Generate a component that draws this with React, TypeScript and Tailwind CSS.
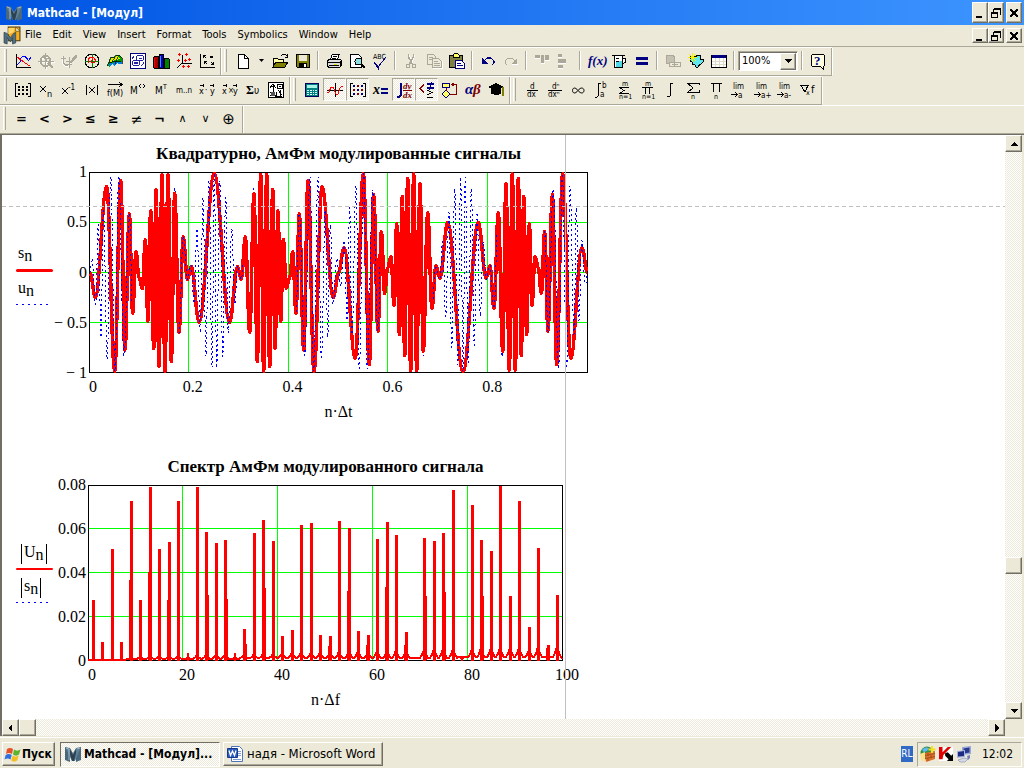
import React from 'react';

type Point = [number, number];

const raised = 'border border-t-white border-l-white border-r-[#716f64] border-b-[#716f64] shadow-[inset_-1px_-1px_0_#aca899] bg-[#ece9d8]';
const checker = 'bg-[repeating-conic-gradient(#ffffff_0_25%,#ece9d8_0_50%)] bg-size-[2px_2px]';

const Icon: React.FC<{ children: React.ReactNode; smooth?: boolean; size?: number }> = ({ children, smooth, size = 16 }) => (
  <svg width={size} height={size} viewBox="0 0 16 16" fill="none" className="shrink-0 overflow-visible" shapeRendering={smooth ? 'auto' : 'crispEdges'} aria-hidden="true">
    {children}
  </svg>
);

const Sans: React.FC<{ x: number; y: number; s?: number; children: React.ReactNode }> = ({ x, y, s = 9, children }) => (
  <text x={x} y={y} fontSize={s} fill="#000" fontFamily="'DejaVu Sans Condensed', 'DejaVu Sans', sans-serif">{children}</text>
);

const Serif: React.FC<{ x: number; y: number; s?: number; fill?: string; children: React.ReactNode }> = ({ x, y, s = 13, fill = '#000080', children }) => (
  <text x={x} y={y} fontSize={s} fill={fill} fontWeight="bold" fontStyle="italic" fontFamily="'Liberation Serif', serif">{children}</text>
);

const MathcadLogo: React.FC<{ size?: number }> = ({ size = 16 }) => (
  <Icon smooth size={size}>
    <path d="M0 1l5 2v13l-5-2zM11 3l5-2v13l-5 2z" fill="#49687c" />
    <path d="M0 1l5 1 3 5 3-5 5-1-6 14H7z" fill="#5f7f93" />
    <path d="M5 3l3 6 3-6v4l-2 8H7L5 8z" fill="#2c4252" />
    <path d="M1 2l3 1v11M15 2l-3 1" stroke="#9fb6c4" />
  </Icon>
);

const MathcadDoc = () => (
  <Icon smooth size={17}>
    <path d="M4 0h11v13H4z" fill="#f5ad1c" stroke="#4d3a10" />
    <path d="M4 1h6l-1 4-5 2z" fill="#ffd668" />
    <path d="M11 0l4 4h-4z" fill="#fff3c4" stroke="#4d3a10" strokeWidth=".6" />
    <path d="M0 5l3 1 3 4 3-4 2-1v10l-3 1v-6l-2 4-3-4v6l-3-1z" fill="#526f80" stroke="#253b47" strokeWidth=".6" />
  </Icon>
);

/* graph toolbar */
const graphIcons: [string, React.ReactNode][] = [
  ['X-Y plot', <Icon><path d="M1.5 1v14M1 14.5h15" stroke="#000" /><path d="M2 12l3-3 1-4 2-2h2l3 4h1l2-3" stroke="#00f" /><path d="M2 4l4 3 4 3 5 3" stroke="#f00" /></Icon>],
  ['Zoom', <Icon><g stroke="#fff" transform="translate(1 1)"><circle cx="7.5" cy="8" r="5" /><path d="M0 8.5h16M7.5 1v15" /></g><g stroke="#aca899"><circle cx="7.5" cy="8" r="5" strokeWidth="2" /><path d="M0 8.5h16M7.5 0v16M5 3l2 3M9 5h2v3H8z" /><path d="M10 10l5 5" strokeWidth="2" /></g></Icon>],
  ['Trace', <Icon><path d="M1 4v5l3 4h5M8 12l8-8" stroke="#fff" /><path d="M0 5h5M2 3v6l3 4 4-2M5 8h6M8 4v11M4 11h7" stroke="#aca899" /><path d="M8 10l6-8h2v2l-6 6z" fill="#aca899" /></Icon>],
  ['Polar plot', <Icon><circle cx="8" cy="8" r="7" stroke="#000" /><path d="M8.5 1v14M1 8.5h14" stroke="#008000" /><path d="M4 10V6l3-2 3 1 2 3-2 2-3-1 2-4" stroke="#f00" /></Icon>],
  ['Surface plot', <Icon><path d="M0 13l4-9h3l2-2h3l3 3v6h-3l-2-2-2 4-3-2-2 3z" fill="#00a000" /><path d="M4 5h3l2-2 3 1 1 2-5 1-2 1-3 1z" fill="#e8e800" /><path d="M1 12l2-2h3l2-2 3 1h4v2h-3l-2-1-2 3-3-2-2 2z" fill="#0080e0" /><path d="M0 13l4-9h3l2-2h3l3 3v6M4 10l4-6M8 11l3-7M2 10l5-2 7 0" stroke="#000" strokeWidth=".7" /></Icon>],
  ['Contour plot', <Icon><path d="M.5.5h15v15H.5z" fill="#fff" stroke="#000080" /><g stroke="#2020a0"><ellipse cx="10" cy="5" rx="4" ry="3" /><ellipse cx="6" cy="10" rx="4" ry="3" /><ellipse cx="6" cy="10" rx="2" ry="1" /><path d="M9 5h3M11 13l2-2V9M2 6l2-3" /></g></Icon>],
  ['3D bar chart', <Icon><path d="M0 5l2-2h3v12H1l-1-1z" fill="#a00000" stroke="#000" /><path d="M6 2l1-1h3v14H6z" fill="#0000c8" stroke="#000" /><path d="M11 6l1-1h3l1 1v9h-5z" fill="#008000" stroke="#000" /><path d="M1.5 5v9" stroke="#f00" /><path d="M7.500 3v11" stroke="#48f" /></Icon>],
  ['3D scatter plot', <Icon><path d="M6.500 2v8.500h9M6 10l-5 5" stroke="#000" /><path d="M3.500 0v3M2 1.500h3M10.500 0v3M9 1.500h3M13.500 5v3M12 6.500h3M2.500 6v3M1 7.500h3M9.500 6v3M8 7.500h3M7.500 12v3M6 13.500h3M12.500 12v3M11 13.500h3" stroke="#f00" /></Icon>],
  ['Vector field plot', <Icon><path d="M1.500 1v14M1 14.500h15" stroke="#000" /><path d="M4 2h3M4.500 2v3M4 2l3 3M11 3h3M13.500 3v2M14 3l-3 2M5 8h3M5.500 8v3M5 8l3 3M12 9l3 3M12 11.500h3M14.500 9v3" stroke="#000" /></Icon>],
];

/* standard toolbar, one list for each separated block */
const NewIcon = <Icon><path d="M3.500 1.500h6l4 4v9.500h-10z" fill="#fff" stroke="#000" /><path d="M9.500 1.500v4h4" stroke="#000" /></Icon>;
const OpenIcon = <Icon><path d="M1 14V5h4l1 1h5v3" fill="#ffffa0" stroke="#000" /><path d="M1 14l3-5h12l-3 5z" fill="#808000" stroke="#000" /><path d="M9 3l2-2h2l2 2M15.500 1v3H13" stroke="#000" /></Icon>;
const SaveIcon = <Icon><path d="M1.500 1.500h13v13h-12l-1-1z" fill="#808000" stroke="#000" /><path d="M4 2h8v6H4z" fill="#ece9d8" /><path d="M4 10h8v5H4z" fill="#000" /><path d="M9 11h2v3H9z" fill="#fff" /></Icon>;

const fileIcons: [string, React.ReactNode][] = [
  ['Print', <Icon><path d="M4.500 6l2-5h7l-2 5" fill="#fff" stroke="#000" /><path d="M7 3.500h4M6 5.500h4" stroke="#000" /><path d="M1.500 7.500l2-1h11l1 1v5l-2 2h-11l-1-2z" fill="#ddd" stroke="#000" /><path d="M1 9.500h13M3 12.500h10M14 8v5" stroke="#000" /><path d="M8 11h3" stroke="#e0e000" /></Icon>],
  ['Print preview', <Icon><path d="M1.500 1.500h8l3 3v10h-11z" fill="#fff" stroke="#000" /><circle cx="9.500" cy="8.500" r="3.500" fill="#8fe0e0" stroke="#000" /><path d="M12 11l4 4" stroke="#000" strokeWidth="2" /></Icon>],
  ['Check spelling', <Icon><Sans x={1} y={6} s={7}>ABC</Sans><path d="M2 9l4 5 8-10" stroke="#000080" /><path d="M2 9l4 4v2z" fill="#000080" stroke="#000080" /></Icon>],
];
const editIcons: [string, React.ReactNode][] = [
  ['Cut', <Icon><g stroke="#fff" transform="translate(1 1)"><path d="M5 1l4 9M11 1l-4 9" /></g><g stroke="#aca899"><path d="M5.500 1v3l4 7M10.500 1v3l-4 7" strokeWidth="1.500" /><circle cx="5" cy="13" r="2" /><circle cx="11" cy="13" r="2" /></g></Icon>],
  ['Copy', <Icon><g stroke="#aca899" fill="#ece9d8"><path d="M1.500 1.500h6l2 2v8h-8z" /><path d="M6.500 5.500h6l3 3v6h-9z" /><path d="M3 4.500h4M3 6.500h3M8 8.500h4M8 10.500h6M8 12.500h6" /></g><path d="M7 15.500h9.500V8" stroke="#fff" /></Icon>],
  ['Paste', <Icon><path d="M.5 2.500h13v12H.5z" fill="#808040" stroke="#000" /><path d="M4 4V2l2-2h2l2 2v2z" fill="#ffff60" stroke="#000" /><path d="M6.500 7.500h6l3 3v5h-9z" fill="#fff" stroke="#000080" /><path d="M8 10.500h4M8 12.500h6" stroke="#000080" /></Icon>],
];
const undoIcons: [string, React.ReactNode][] = [
  ['Undo', <Icon><path d="M4 8l3-3h4l3 3v2l-2 2" stroke="#000080" strokeWidth="1.200" /><path d="M2 5v6h6z" fill="#000080" /></Icon>],
  ['Redo', <Icon><path d="M12 8L9 5H5L2 8v2l2 2" stroke="#aca899" /><path d="M14 5v6H8z" fill="#aca899" /><path d="M9 11.500h6" stroke="#fff" /></Icon>],
];
const alignIcons: [string, React.ReactNode][] = [
  ['Align across', <Icon><path d="M1 2h5v3H1zM7 2h3v8H7zM11 2h4v5h-4z" fill="#aca899" /><path d="M1 5.500h5M7 10.500h4M11 7.500h5" stroke="#fff" /></Icon>],
  ['Align down', <Icon><path d="M1 1h4v3H1zM1 6h8v4H1zM1 12h5v3H1z" fill="#aca899" /><path d="M1 4.500h4M1 10.500h8M1 15.500h5" stroke="#fff" /></Icon>],
];
const insertIcons: [string, React.ReactNode][] = [
  ['Insert function', <Icon><Serif x={0} y={12} s={13}>f(x)</Serif></Icon>],
  ['Insert unit', <Icon><path d="M1 2.500h13M3.500 3v11.500h8V3M12 5.500h2.500V9L12 11" fill="#fff" stroke="#000" /><path d="M5 8h6v6H5z" fill="#50d8e8" /><path d="M5 5.500h3M5 8.500h3" stroke="#000" /></Icon>],
  ['Calculate', <Icon><path d="M2 4h12v3H2zM2 9h12v3H2z" fill="#000080" /></Icon>],
];
const linkIcons: [string, React.ReactNode][] = [
  ['Insert hyperlink', <Icon><path d="M1.500 2h6l2 2v6h-8z" fill="#c5c1b2" stroke="#aca899" /><path d="M4.500 9.500h5v4h-5zM9.500 9.500h6v4h-6z" fill="#ece9d8" stroke="#aca899" /><path d="M7 11.500h6" stroke="#aca899" /></Icon>],
  ['Component wizard', <Icon><path d="M2 3h4l2 1 1-2h3v4h3l1 2-3 3h-1l-2 3H8l-1-2-3-1V8H2z" fill="#60e8f0" stroke="#000" /><path d="M1 1l7 7M8 1L1 8M0 4.500h9M4.500 0v9" stroke="#f0f000" /></Icon>],
  ['Run Math Connex', <Icon><path d="M.5 2.500h15v12H.5z" fill="#fff" stroke="#000" /><path d="M1 2h14v3H1z" fill="#000080" /><path d="M4.500 5v9M8.500 5v9M12.500 5v9M1 8.500h14M1 11.500h14" stroke="#dedac8" /></Icon>],
];

const Vec: React.FC<{ op: string }> = ({ op }) => (
  <Icon><path d="M1 3.500h4M11 3.500h4M4 2v3M14 2v3" stroke="#000" /><Sans x={0} y={12} s={9}>x</Sans><Sans x={6} y={11} s={8}>{op}</Sans><Sans x={11} y={12} s={9}>y</Sans></Icon>
);

const matrixIcons: [string, React.ReactNode][] = [
  ['Matrix', <Icon><path d="M3 1.500H.5v13H3M13 1.500h2.500v13H13" stroke="#000" /><path d="M3 4h2v2H3zM7 4h2v2H7zM11 4h2v2h-2zM3 7h2v2H3zM7 7h2v2H7zM11 7h2v2h-2zM3 11h2v2H3zM7 11h2v2H7zM11 11h2v2h-2z" fill="#000" /></Icon>],
  ['Subscript', <Icon><path d="M2 4l6 6M8 4l-6 6" stroke="#000" /><Sans x={9} y={15}>n</Sans></Icon>],
  ['Inverse', <Icon><path d="M1 6l6 6M7 6l-6 6" stroke="#000" /><Sans x={7} y={8} s={8}>-1</Sans></Icon>],
  ['Determinant', <Icon><path d="M2.500 3v10M13.500 3v10M5 5l6 6M11 5l-6 6" stroke="#000" /></Icon>],
  ['Vectorize', <Icon><path d="M1 2.500h14M12 0l3 2.500L12 5" stroke="#000" /><Sans x={0} y={14} s={9}>f(M)</Sans></Icon>],
  ['Matrix column', <Icon><Sans x={0} y={12} s={10}>M</Sans><path d="M11 2L9 4l2 2M13 2l2 2-2 2" stroke="#000" /></Icon>],
  ['Matrix transpose', <Icon><Sans x={2} y={12} s={10}>M</Sans><Sans x={10} y={7} s={7}>T</Sans></Icon>],
  ['Range variable', <Icon><Sans x={0} y={11} s={8}>m..n</Sans></Icon>],
  ['Dot product', <Vec op="·" />],
  ['Cross product', <Vec op="×" />],
  ['Vector sum', <Icon><text x="1" y="12" fontSize="12" fontWeight="bold" fill="#000" fontFamily="'Liberation Serif', serif">Σ</text><Sans x={9} y={12} s={10}>υ</Sans></Icon>],
  ['Picture', <Icon><path d="M.5.5h15v15H.5z" fill="#fff" stroke="#000" /><path d="M2 6l3-4 3 4M5 2v8M2 10h5M9 2h5v4H9zM10 8l4 5M2 13h6M9 10l-1 4h6M11 4h2M3 4h4M12 8v6" stroke="#000" /><path d="M3 10h4v4H3z" fill="#555" /></Icon>],
];

const mathIcons: [string, React.ReactNode, boolean][] = [
  ['Calculator toolbar', <Icon><path d="M1.500 1.500h13v13h-13z" fill="#008080" stroke="#000060" /><path d="M3 3h10v3H3z" fill="#a8f0e8" /><path d="M3 8h2v1H3zM6 8h2v1H6zM9 8h1v1H9zM11 8h2v1h-2zM3 10h2v1H3zM6 10h2v1H6zM9 10h1v1H9zM11 10h2v1h-2zM3 12h2v1H3zM6 12h2v1H6zM9 12h1v1H9zM11 12h2v1h-2z" fill="#e0ffff" /></Icon>, false],
  ['Graph toolbar', <Icon><path d="M0 8.500h16M8.500 1v14" stroke="#000" /><path d="M0 11l2-1 2-5h2l3 7h2l2-6 2-2h1" stroke="#f00" /></Icon>, true],
  ['Matrix toolbar', <Icon><path d="M3 1.500H.5v13H3M13 1.500h2.500v13H13" stroke="#000" /><path d="M3 3h2v2H3zM11 3h2v2h-2zM7 7h2v2H7zM3 11h2v2H3zM11 11h2v2h-2z" fill="#000080" /><path d="M7 3h2v2H7zM3 7h2v2H3zM11 7h2v2h-2zM7 11h2v2H7z" fill="#800000" /></Icon>, true],
  ['Evaluation toolbar', <Icon><Serif x={0} y={12} s={14} fill="#000">x</Serif><path d="M8 6h7v2H8zM8 10h7v2H8z" fill="#000080" /></Icon>, false],
  ['Calculus toolbar', <Icon><path d="M6 1.500H4.500v12L3 15H1" stroke="#000080" strokeWidth="2" /><Serif x={7} y={7} s={9} fill="#800000">dy</Serif><path d="M7 8.500h9" stroke="#800000" /><Serif x={7} y={16} s={9} fill="#800000">dx</Serif></Icon>, true],
  ['Boolean toolbar', <Icon><path d="M5 3L1 6.500 5 10" stroke="#800000" strokeWidth="1.500" /><path d="M8 1h7v2H8zM8 5h7v2H8z" fill="#000080" /><path d="M13 0l-3 8" stroke="#000080" /><path d="M8 8l5 2.500L8 13M8 15.500h6" stroke="#000" /></Icon>, true],
  ['Programming toolbar', <Icon><path d="M.5 1.500h7v4h-7z" fill="#ffff60" stroke="#000080" /><path d="M4 8l4 4-4 4-4-4z" fill="#ffff60" stroke="#000080" /><path d="M4.500 5.500v3M8 12.500h6V2.500h-4M12 1l-2 1.500L12 4" stroke="#800000" /></Icon>, false],
  ['Greek toolbar', <Icon><Serif x={0} y={12} s={15}>α</Serif><Serif x={8} y={12} s={15} fill="#800000">β</Serif></Icon>, false],
  ['Symbolic toolbar', <Icon><path d="M0 5l8-4 8 4-8 4z" fill="#000" /><path d="M3 7h10v5l-5 1-5-1z" fill="#000" /><path d="M15 5v9" stroke="#808000" strokeWidth="2" /></Icon>, false],
];

const Bounds: React.FC<{ sym: string; top?: string; bottom?: string }> = ({ sym, top, bottom }) => (
  <Icon>
    {top && <Sans x={6} y={4} s={7}>{top}</Sans>}
    {sym === 'Σ' ? <path d={top ? 'M13 5.500H4l4 3-4 3h9' : 'M14 3V1.500H3l5 4.500-5 4h11V8'} stroke="#000" /> : <path d={top ? 'M3 5.500h11M6.500 5v7M10.500 5v7' : 'M3 1.500h11M5.500 1v9M11.500 1v9'} stroke="#000" />}
    <Sans x={bottom === 'n' ? 6 : 3} y={17} s={7}>{bottom}</Sans>
  </Icon>
);

const Limit: React.FC<{ side?: string }> = ({ side }) => (
  <Icon><Sans x={2} y={7} s={8}>lim</Sans><path d="M0 12.500h6M4 10l2 2.500L4 15" stroke="#000" /><Sans x={7} y={16} s={8}>{'a' + (side ?? '')}</Sans></Icon>
);

const calculusIcons: [string, React.ReactNode][] = [
  ['Derivative', <Icon><Sans x={6} y={7} s={8}>d</Sans><path d="M3 8.500h11" stroke="#000" /><Sans x={3} y={15} s={8}>dx</Sans></Icon>],
  ['Nth derivative', <Icon><Sans x={5} y={7} s={8}>dⁿ</Sans><path d="M1 8.500h14" stroke="#000" /><Sans x={1} y={15} s={8}>dxⁿ</Sans></Icon>],
  ['Infinity', <Icon smooth><path d="M8 8.500C5 4.500 2.500 6 2.500 8.500S5 12.500 8 8.500s6-2.500 6 0-3 4-6 0z" stroke="#000" /></Icon>],
  ['Definite integral', <Icon><path d="M8 1.500H5.500v12L4 15H2" stroke="#000" /><Sans x={9} y={6} s={8}>b</Sans><Sans x={7} y={15} s={8}>a</Sans></Icon>],
  ['Summation', <Bounds sym="Σ" top="m" bottom="n=1" />],
  ['Iterated product', <Bounds sym="Π" top="m" bottom="n=1" />],
  ['Indefinite integral', <Icon><path d="M11 1.500H8.500v12L7 14.500H5" stroke="#000" /></Icon>],
  ['Range summation', <Bounds sym="Σ" bottom="n" />],
  ['Range product', <Bounds sym="Π" bottom="n" />],
  ['Two-sided limit', <Limit />],
  ['Limit from above', <Limit side="+" />],
  ['Limit from below', <Limit side="-" />],
  ['Gradient', <Icon><path d="M1 3.500h7L5 10z" stroke="#000" /><Sans x={6} y={13} s={7}>x</Sans><Sans x={11} y={11} s={11}>f</Sans></Icon>],
];

const booleanOps: [string, string][] = [
  ['Equal to', '='], ['Less than', '<'], ['Greater than', '>'], ['Less than or equal', '≤'], ['Greater than or equal', '≥'],
  ['Not equal', '≠'], ['Not', '¬'], ['And', '∧'], ['Or', '∨'], ['Xor', '⊕'],
];

const ToolButton: React.FC<{ label: string; pressed?: boolean; children: React.ReactNode }> = ({ label, pressed, children }) => (
  <button
    type="button"
    aria-label={label}
    className={`flex h-[23px] w-[23px] shrink-0 items-center justify-center ${pressed ? `border border-t-[#aca899] border-l-[#aca899] border-r-white border-b-white ${checker}` : ''}`}
  >
    {children}
  </button>
);

const Buttons: React.FC<{ items: [string, React.ReactNode, boolean?][] }> = ({ items }) => (
  <>
    {items.map(([label, icon, pressed]) => (
      <ToolButton key={label} label={label} pressed={pressed}>{icon}</ToolButton>
    ))}
  </>
);

const Separator = () => (
  <div className="flex w-2 shrink-0 justify-center">
    <div className="h-[19px] w-[2px] border-l border-[#aca899] bg-white" />
  </div>
);

const Strip: React.FC<{ children: React.ReactNode; wide?: boolean }> = ({ children, wide }) => (
  <div className={`flex h-[29px] border-t border-t-white border-b border-b-[#aca899] ${wide ? '' : 'w-max'}`}>{children}</div>
);

const Group: React.FC<{ children: React.ReactNode; first?: boolean }> = ({ children, first }) => (
  <div className={`flex shrink-0 items-center border-r border-[#aca899] pr-[2px] pb-[2px] shadow-[1px_0_0_#ffffff] ${first ? 'pl-1' : 'ml-px pl-[2px]'}`}>
    <div className="mr-1 h-[23px] w-[3px] border-l border-l-white border-r border-r-[#aca899]" />
    {children}
  </div>
);

const WindowButtons: React.FC<{ small?: boolean }> = ({ small }) => {
  const box = `flex w-4 items-center justify-center ${small ? 'h-[15px]' : 'h-[21px]'} ${raised}`;
  return (
    <div className="flex">
      <button type="button" aria-label="Minimize" className={box}>
        <Icon size={12}><path d="M3 12h8v2H3z" fill="#000" /></Icon>
      </button>
      <button type="button" aria-label="Restore" className={box}>
        <Icon size={12}><path d="M5 1h10v3H5zM13 4h2v6h-2zM1 6h10v3H1z" fill="#000" /><path d="M5 2v4M1.700 7v7.300h8.600V7" stroke="#000" strokeWidth="1.400" /></Icon>
      </button>
      <button type="button" aria-label="Close" className={`ml-[2px] ${box}`}>
        <Icon size={12}><path d="M3 3l10 10M13 3L3 13" stroke="#000" strokeWidth="3.500" /></Icon>
      </button>
    </div>
  );
};

/* Turning points of the modulated carrier over the first quarter: time in 1/1492, level in percent. */
const carrierStart: Point[] = [[0, 0], [16, -25], [50, 86], [74, -99], [92, 92], [105, -78], [118, 59], [128, -41], [138, 21], [147, -5], [157, -16], [166, 33]];
const carrierDense: Point[] = [[174, -49], [182, 62], [191, -76], [198, 83], [207, -94], [216, 98], [225, -99], [234, 98], [244, -89], [254, 79], [267, -60], [280, 36], [292, -7]];
const signalQuarter: Point[] = [...carrierStart, ...carrierDense, [304, 6], [327, -50], [373, 99]];
const quadratureQuarter: Point[] = [
  [0, 0], [6, 14], [17, -32], [25, 48], [33, -65], [40, 62], [52, -87], [62, 96], [75, -99], [86, 96], [102, -83], ...carrierStart.slice(6),
  ...carrierDense.slice(0, 9), [255, 84], ...carrierDense.slice(10), [303, 7], [312, -31], [321, 44], [331, -60], [339, 75], [348, -84], [357, 92], [366, -95], [373, 99],
];

const PERIOD = 1492;

const unfold = (quarter: Point[]): Point[] => {
  const half = [...quarter, ...quarter.slice(0, -1).reverse().map(([t, v]): Point => [PERIOD / 2 - t, v])];
  return [...half, ...half.slice(0, -1).reverse().map(([t, v]): Point => [PERIOD - t, -v])];
};

const wavePath = (points: Point[]) => {
  const sx = (t: number) => (t / 3 + 1).toFixed(1);
  const sy = (v: number) => (100.5 - v).toFixed(1);
  return points.reduce((d, [t, v], i) => {
    if (i === 0) return `M${sx(t)} ${sy(v)}`;
    const [pt, pv] = points[i - 1];
    const bend = (t - pt) * 0.37;
    return `${d}C${sx(pt + bend)} ${sy(pv)} ${sx(t - bend)} ${sy(v)} ${sx(t)} ${sy(v)}`;
  }, '');
};

const signalPath = wavePath(unfold(signalQuarter));
const quadraturePath = wavePath(unfold(quadratureQuarter));

/* Spectral lines: position and height in plot pixels. */
const spectrum: Point[] = [
  [5, 61], [14, 19], [24, 112], [33, 19], [43, 160], [52, 61], [62, 174], [71, 112], [81, 119], [90, 160], [100, 8], [109, 174], [118, 129], [128, 118], [137, 121],
  [147, 8], [156, 32], [166, 128], [175, 141], [185, 120], [194, 25], [204, 31], [213, 136], [223, 138], [232, 26], [242, 25], [251, 140], [261, 133], [270, 30], [280, 26],
  [289, 122], [299, 139], [308, 126], [318, 29], [336, 123], [346, 120], [355, 128], [365, 171], [374, 5], [384, 156], [393, 121], [403, 110], [412, 175], [422, 65],
  [431, 160], [441, 34], [450, 113], [460, 16], [469, 66],
];

const shoulders: Point[] = [[42, 80], [61, 88], [80, 60], [119, 65], [138, 61], [157, 16], [176, 72], [241, 14], [260, 69], [279, 15], [298, 73], [317, 15], [337, 64], [356, 68], [394, 64], [459, 12]];

/* baseline with the skirt that each line leaves around it */
const skirtPath = spectrum.reduce((d, [x, h]) => {
  const floor = x < 40 ? 0 : x < 150 ? 1 : x < 370 ? 2 : 3;
  const skirt = x < 40 ? 0 : Math.min(h * 0.3, 2 + x / 40);
  const y = (v: number) => (175 - v).toFixed(1);
  return `${d}L${x - 4} ${y(floor)}L${x - 2} ${y(Math.max(floor, skirt / 2))}L${x} ${y(skirt)}L${x + 2} ${y(Math.max(floor, skirt / 2))}L${x + 4} ${y(floor)}`;
}, 'M0 175') + 'L474 174';

const Sub: React.FC<{ base: string; abs?: boolean }> = ({ base, abs }) => (
  <span className={`inline-flex h-5 items-start leading-4 ${abs ? 'ml-[5px] border-x border-black px-[2px]' : 'px-[2px]'}`}>
    {base}<span className="pt-[3px]">n</span>
  </span>
);

interface FigureProps {
  title: string;
  xLabels: string[];
  yLabels: string[];
  xTitle: string;
  traces: [string, string];
  abs?: boolean;
  children: React.ReactNode;
}

const Figure: React.FC<FigureProps> = ({ title, xLabels, yLabels, xTitle, traces, abs, children }) => (
  <figure className="grid w-max grid-cols-[37px_auto_auto] text-[16px] leading-4">
    <figcaption className="col-start-3 pb-2 text-center text-[17px] leading-5 font-bold">{title}</figcaption>
    <div className={`row-start-2 flex flex-col items-start self-center ${abs ? '' : 'pt-1'}`}>
      <Sub base={traces[0]} abs={abs} />
      <div className={`mt-1 w-full rounded-full bg-[#ff0000] ${abs ? 'h-[2px]' : 'h-[3px]'}`} />
      <div className="pt-2"><Sub base={traces[1]} abs={abs} /></div>
      <div className="mt-1 h-px w-[32px] bg-[repeating-linear-gradient(90deg,#0000ff_0_2px,transparent_2px_6px)]" />
    </div>
    <div className={`row-start-2 -my-2 flex flex-col items-end justify-between pr-[2px] ${abs ? 'w-[35px]' : 'w-9'}`}>
      {yLabels.map((label) => <span key={label} className="whitespace-nowrap">{label}</span>)}
    </div>
    <div className="row-start-2">{children}</div>
    <div className="col-start-3 row-start-3 -mr-1 ml-1 flex justify-between pt-[6px]">
      {xLabels.map((label, i) => <span key={i} className="flex h-4 w-0 justify-center">{label}</span>)}
    </div>
    <div className="col-start-3 row-start-4 pt-[9px] text-center">{xTitle}</div>
  </figure>
);

const SignalPlot = () => (
  <svg width="499" height="201" viewBox="0 0 499 201" fill="none" shapeRendering="crispEdges" className="block" role="img" aria-label="Signal plot">
    <defs>
      <clipPath id="sparse">
        <path d="M0 0h43v201H0zM90 0h64v201H90zM207 0h84v201h-84zM344 0h64v201h-64zM455 0h44v201h-44z" />
      </clipPath>
    </defs>
    <path d="M99.500 0v201M199.500 0v201M298.500 0v201M398.500 0v201M0 50.500h498M0 100.500h498M0 150.500h498" stroke="#00ff00" />
    <path d="M.5.5h498v200H.5z" stroke="#000" />
    <path d={quadraturePath} stroke="#0000ff" strokeDasharray="2 3" />
    <path d={signalPath} stroke="#ff0000" strokeWidth="3.500" strokeLinejoin="round" />
    <path d={quadraturePath} stroke="#0000ff" strokeDasharray="2 3" clipPath="url(#sparse)" />
  </svg>
);

const SpectrumPlot = () => (
  <svg width="475" height="176" viewBox="0 0 475 176" fill="none" shapeRendering="crispEdges" className="block" role="img" aria-label="Spectrum plot">
    <path d="M94.500 0v176M189.500 0v176M284.500 0v176M379.500 0v176M0 43.500h474M0 87.500h474M0 131.500h474" stroke="#00ff00" />
    <path d="M.5.5h474v175H.5z" stroke="#000" />
    <path d={skirtPath} stroke="#ff0000" strokeWidth="2" />
    {spectrum.map(([x, h]) => <rect key={x} x={x - 1} y={176 - h} width={h > 10 ? 3 : 2} height={h} fill="#ff0000" />)}
    {shoulders.map(([x, h]) => <rect key={x} x={x - 1} y={175 - h} width="3" height={h} fill="#ff0000" />)}
  </svg>
);

const arrows = { up: 'M4 10h8L8 6z', down: 'M4 6h8l-4 4z', left: 'M9 4v8L5 8z', right: 'M6 4v8l4-4z' };

const ScrollButton: React.FC<{ dir: keyof typeof arrows }> = ({ dir }) => (
  <button type="button" aria-label={`Scroll ${dir}`} className={`flex h-[17px] w-[17px] shrink-0 items-center justify-center ${raised}`}>
    <Icon><path d={arrows[dir]} fill="#000" /></Icon>
  </button>
);

const menus = ['File', 'Edit', 'View', 'Insert', 'Format', 'Tools', 'Symbolics', 'Window', 'Help'];

const App: React.FC = () => (
  <div className="flex h-screen flex-col overflow-hidden bg-[#ece9d8] font-['DejaVu_Sans_Condensed','DejaVu_Sans',sans-serif] text-[11px] text-black">
    <header className="flex h-[25px] shrink-0 items-center bg-linear-to-r from-[#0054e3] to-[#3d95ff] pr-[2px] pl-[6px] text-white">
      <MathcadLogo />
      <h1 className="flex-1 pl-[5px] text-[12px] font-bold">Mathcad - [Модул]</h1>
      <WindowButtons />
    </header>

    <nav className="flex h-[21px] shrink-0 items-center pr-[2px] pl-1">
      <MathcadDoc />
      <div className="flex flex-1 pl-[4px]">
        {menus.map((menu) => <button key={menu} type="button" className="mr-[11px]">{menu}</button>)}
      </div>
      <WindowButtons small />
    </nav>

    <div className="shrink-0 border-t border-[#aca899]">
      <Strip>
        <Group first><Buttons items={graphIcons} /></Group>
        <Group>
          <ToolButton label="New">{NewIcon}</ToolButton>
          <button type="button" aria-label="New from template" className="flex w-[14px] justify-center">
            <svg width="5" height="3" viewBox="0 0 5 3"><path d="M0 0h5L2.500 3z" /></svg>
          </button>
          <ToolButton label="Open">{OpenIcon}</ToolButton>
          <ToolButton label="Save">{SaveIcon}</ToolButton>
          <Separator />
          <Buttons items={fileIcons} />
          <Separator />
          <Buttons items={editIcons} />
          <Separator />
          <Buttons items={undoIcons} />
          <Separator />
          <Buttons items={alignIcons} />
          <Separator />
          <Buttons items={insertIcons} />
          <Separator />
          <Buttons items={linkIcons} />
          <Separator />
          <div className="relative h-5 w-[60px] border border-[#aca899] border-r-white border-b-white shadow-[inset_1px_1px_0_#716f64]">
            <select aria-label="Zoom" className="h-full w-full appearance-none bg-white pt-px pl-[3px] text-[11px] shadow-[inset_1px_1px_0_#716f64] outline-none">
              <option>100%</option>
            </select>
            <span className={`pointer-events-none absolute top-px right-px bottom-0 flex w-4 items-center justify-center ${raised}`}>
              <Icon><path d="M4 6h8l-4 4z" fill="#000" /></Icon>
            </span>
          </div>
          <Separator />
          <ToolButton label="Help">
            <Icon><path d="M1.500 2.500l1-1h11l1 1v10l-1 1v2.500l-3-2.500h-8l-1-1z" fill="#ffffe0" stroke="#000" /><text x="4" y="12" fontSize="13" fontWeight="bold" fill="#000080" fontFamily="'Liberation Serif', serif">?</text></Icon>
          </ToolButton>
        </Group>
      </Strip>
      <Strip>
        <Group first><Buttons items={matrixIcons} /></Group>
        <Group><Buttons items={mathIcons} /></Group>
        <Group><Buttons items={calculusIcons} /></Group>
      </Strip>
      <Strip wide>
        <Group>
          {booleanOps.map(([label, op]) => (
            <ToolButton key={op} label={label}>
              <span className={`font-['DejaVu_Sans',sans-serif] leading-4 ${op === '∧' || op === '∨' ? 'text-[11px]' : op === '⊕' ? 'text-[15px]' : op === '≠' ? 'text-[14px]' : 'text-[13px] font-bold'}`}>{op}</span>
            </ToolButton>
          ))}
        </Group>
      </Strip>
    </div>

    <main className="flex min-h-0 flex-1 border-t border-l-2 border-[#716f64] pr-[2px]">
      <div className="flex min-w-0 flex-1 flex-col">
        <div className="relative min-h-0 flex-1 overflow-hidden bg-white pt-[9px] pl-[14px] font-['Liberation_Serif',serif]">
          <Figure title="Квадратурно, АмФм модулированные сигналы" xLabels={['0', '0.2', '0.4', '0.6', '0.8', '']} yLabels={['1', '0.5', '0', '− 0.5', '− 1']} xTitle="n·Δt" traces={['s', 'u']}>
            <SignalPlot />
          </Figure>
          <div className="pt-[37px]">
            <Figure title="Спектр АмФм модулированного сигнала" xLabels={['0', '20', '40', '60', '80', '100']} yLabels={['0.08', '0.06', '0.04', '0.02', '0']} xTitle="n·Δf" traces={['U', 's']} abs>
              <SpectrumPlot />
            </Figure>
          </div>
          {/* page margin guides */}
          <div className="absolute top-[71px] right-0 left-0 h-px bg-[repeating-linear-gradient(90deg,#c0c0c0_0_4px,transparent_4px_7px)]" />
          <div className="absolute top-0 bottom-0 left-[563px] w-px bg-[#c0c0c0]" />
        </div>
        <div className={`flex h-[17px] shrink-0 ${checker}`}>
          <ScrollButton dir="left" />
          <div className={`w-[17px] ${raised}`} />
          <div className="flex-1" />
          <ScrollButton dir="right" />
        </div>
      </div>
      <div className="flex w-[17px] shrink-0 flex-col">
        <div className={`flex min-h-0 flex-1 flex-col ${checker}`}>
          <ScrollButton dir="up" />
          <div className="grow-[405]" />
          <div className={`h-[17px] ${raised}`} />
          <div className="grow-[128]" />
          <ScrollButton dir="down" />
        </div>
        <div className="h-[17px] shrink-0" />
      </div>
    </main>

    <footer className="mt-px flex h-[31px] shrink-0 items-center border-t border-white pt-[2px] pr-[2px] pl-[2px] text-[13px]">
      <button type="button" className={`flex h-6 w-[53px] items-center pl-[2px] font-bold ${raised}`}>
        <Icon smooth>
          <path d="M2 3c2-1.500 4-1.500 6 0L7 8C5 6.500 3 6.500 1 8z" fill="#e8502a" />
          <path d="M9 3.500c2 1.500 4 1.500 6.500 0l-1.500 5c-2 1.500-4 1.500-6 0z" fill="#5cb32c" />
          <path d="M.7 9c2-1.500 4-1.500 6 0l-1.200 4.500c-2-1.500-4-1.500-6 0z" fill="#2f6fe0" />
          <path d="M7.700 9.500c2 1.500 4 1.500 6 0l-1.500 5c-2 1.500-4 1.500-6 0z" fill="#f5bd20" />
        </Icon>
        <span className="pl-px text-[12px]">Пуск</span>
      </button>
      <button type="button" className={`ml-[5px] flex h-[25px] w-40 items-center border border-t-[#716f64] border-l-[#716f64] border-r-white border-b-white pl-1 text-[12px] font-bold ${checker}`}>
        <MathcadLogo />
        <span className="pl-[3px] whitespace-nowrap">Mathcad - [Модул]...</span>
      </button>
      <button type="button" className={`ml-[3px] flex h-6 w-[160px] items-center pl-[3px] ${raised}`}>
        <Icon smooth>
          <path d="M4.500.5h8l3 3v12h-11z" fill="#fff" stroke="#5074b8" />
          <path d="M11 5.500h3M11 7.500h3M11 9.500h3M6 13.500h8" stroke="#7a9ad0" />
          <path d="M.5 2.500h10v9H.5z" fill="#2a5bc0" stroke="#173a88" />
          <path d="M2 4.500l1.500 5L5.500 5l2 4.500L9 4.500" stroke="#fff" strokeWidth="1.300" />
        </Icon>
        <span className="pl-1 whitespace-nowrap">надя - Microsoft Word</span>
      </button>
      <div className="flex-1" />
      <button type="button" aria-label="Keyboard language" className="mr-[4px] h-4 w-3 bg-[#316ac5] text-[10px] leading-4 text-white">RL</button>
      <div className="flex h-[25px] w-[105px] items-center border border-t-[#aca899] border-l-[#aca899] border-r-white border-b-white pl-[2px]">
        <Icon smooth>
          <circle cx="7" cy="7" r="6.500" fill="#2f8f4a" />
          <path d="M2 4c2-3 5-3 7-2L7 5 4 6z" fill="#63b8f0" />
          <path d="M0 8l5-2v10l-4-2z" fill="#ffe08a" />
          <path d="M5 7l10-2v8L6 16z" fill="#d9702c" />
          <path d="M5 9.500l10-2M5 12.500l10-2M8 7v3M11 9v3M8 12v3" stroke="#9a3f10" strokeWidth=".7" />
          <path d="M12 0v7M8.500 3.500h7" stroke="#f8e020" strokeWidth="2" />
        </Icon>
        <span className="pl-[3px]">
          <Icon smooth size={14}>
            <path d="M0 0h16v16H0z" fill="#fff" />
            <path d="M0 0h4v6l6-6h4L5 9l-1 5H0z" fill="#e00000" />
            <path d="M7 7l3-1 4 4 2-2v8H9l2-2-4-4z" fill="#000" />
          </Icon>
        </span>
        <span className="pl-[3px]">
          <Icon smooth>
            <path d="M6 1l9-1v8l-9 1z" fill="#9aa8d8" />
            <path d="M7.500 2.500l6-1v5l-6 1z" fill="#28388c" />
            <path d="M1 5l8-1v7l-8 1z" fill="#a8b4e0" />
            <path d="M2 6l6-1v5l-6 .5z" fill="#1c2c80" />
            <path d="M2 14l6-2 4 1-3 3H4z" fill="#d4d8e8" stroke="#8890a8" strokeWidth=".6" />
            <path d="M11 10l3-1v3l-2 2" fill="#7080b8" />
          </Icon>
        </span>
        <time className="flex-1 pr-2 text-right text-[12px]">12:02</time>
      </div>
    </footer>
  </div>
);

export default App;
